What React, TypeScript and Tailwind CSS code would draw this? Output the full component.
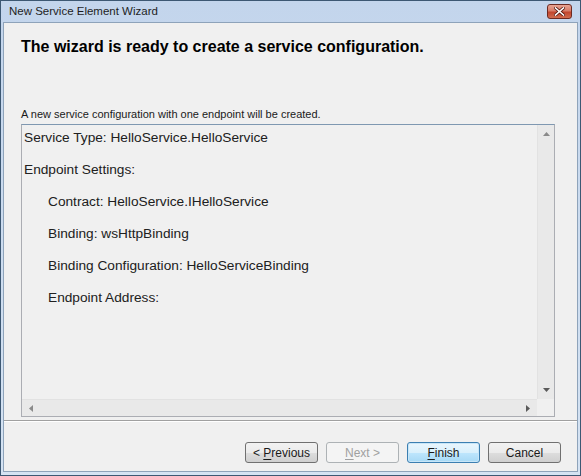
import React from 'react';

const lines: { text: string; indent: boolean }[] = [
    { text: 'Service Type: HelloService.HelloService', indent: false },
    { text: 'Endpoint Settings:', indent: false },
    { text: 'Contract: HelloService.IHelloService', indent: true },
    { text: 'Binding: wsHttpBinding', indent: true },
    { text: 'Binding Configuration: HelloServiceBinding', indent: true },
    { text: 'Endpoint Address:', indent: true },
];

function WizButton({ label, hot, disabled, focused }: { label: string; hot?: number; disabled?: boolean; focused?: boolean }) {
    const before = hot === undefined ? label : label.slice(0, hot);
    const key = hot === undefined ? '' : label.charAt(hot);
    const after = hot === undefined ? '' : label.slice(hot + 1);

    let box = 'border-[#707070] bg-[linear-gradient(#f2f2f2_0%,#ebebeb_50%,#dddddd_51%,#cfcfcf_100%)] text-[#1a1a1a]';
    if (disabled) box = 'border-[#adb2b5] bg-[#f4f4f4] text-[#a0a0a0]';
    if (focused) box = 'border-[#3c7fb1] bg-[linear-gradient(#eaf6fd_0%,#d9f0fc_50%,#bee6fd_51%,#a7d9f5_100%)] text-[#1a1a1a] shadow-[inset_0_0_0_1px_#c8e6f8]';

    return (
        <div className={`w-[73px] h-[21px] rounded-[3px] border flex items-center justify-center text-[12px] ${box}`}>
            <span>
                {before}
                {key && <span className="underline underline-offset-2">{key}</span>}
                {after}
            </span>
        </div>
    );
}

function App() {
    return (
        <div className="w-[581px] h-[476px] bg-[#3d5873] p-px font-['Liberation_Sans',Arial,sans-serif]">
            <div className="w-full h-full bg-[linear-gradient(#c3d5ec,#d5e3f3)] flex flex-col px-[2px] pb-[3px]">
                {/* title bar */}
                <div className="h-[21px] flex items-center justify-between pl-[6px] pr-[6px] shrink-0">
                    <span className="text-[11.5px] text-[#1e1e1e]">New Service Element Wizard</span>
                    <div className="w-[25px] h-[15px] mt-[-1px] rounded-[3px] border border-[#6d2a22] bg-[linear-gradient(#e8a493_0%,#d77c68_45%,#c2452d_55%,#d06c4f_100%)] flex items-center justify-center">
                        <svg width="11" height="9" viewBox="0 0 11 9">
                            <path d="M1.5 1 L9.5 8 M9.5 1 L1.5 8" stroke="#5a1b12" strokeWidth="3.2" strokeLinecap="square" />
                            <path d="M1.5 1 L9.5 8 M9.5 1 L1.5 8" stroke="#ffffff" strokeWidth="1.6" strokeLinecap="square" />
                        </svg>
                    </div>
                </div>

                {/* client area */}
                <div className="flex-1 bg-[#f0f0f0] border border-[#8ea3ba] flex flex-col">
                    <div className="pl-[17px] pt-[14px] h-[85px]">
                        <h1 className="text-[16px] font-bold text-black leading-[20px]">
                            The wizard is ready to create a service configuration.
                        </h1>
                    </div>
                    <div className="pl-[17px] text-[11px] leading-[13px] text-[#1a1a1a] h-[16px]">
                        A new service configuration with one endpoint will be created.
                    </div>

                    {/* summary box */}
                    <div className="ml-[17px] w-[534px] h-[293px] border border-[#abadb3] border-t-[#7f98b1] bg-[#f0f0f0] flex flex-col">
                        <div className="flex flex-1 min-h-0">
                            <div className="flex-1 pl-[2px] pt-[5px] text-[13.7px] leading-[16px] text-[#202020]">
                                {lines.map((l) => (
                                    <div key={l.text} className={`mb-[16px] ${l.indent ? 'pl-[24px]' : ''}`}>
                                        {l.text}
                                    </div>
                                ))}
                            </div>
                            <div className="w-[17px] bg-[#e9e9e9] border-l border-[#e2e2e2] flex flex-col items-center justify-between py-[7px]">
                                <svg width="7" height="4" viewBox="0 0 7 4"><path d="M3.5 0 L7 4 L0 4 Z" fill="#8a8a8a" /></svg>
                                <svg width="7" height="4" viewBox="0 0 7 4"><path d="M0 0 L7 0 L3.5 4 Z" fill="#5a5a5a" /></svg>
                            </div>
                        </div>
                        <div className="h-[17px] flex shrink-0">
                            <div className="flex-1 bg-[#e9e9e9] border-t border-[#e2e2e2] flex items-center justify-between px-[7px]">
                                <svg width="4" height="7" viewBox="0 0 4 7"><path d="M4 0 L4 7 L0 3.5 Z" fill="#8a8a8a" /></svg>
                                <svg width="4" height="7" viewBox="0 0 4 7"><path d="M0 0 L4 3.5 L0 7 Z" fill="#5a5a5a" /></svg>
                            </div>
                            <div className="w-[17px] bg-[#f0f0f0]" />
                        </div>
                    </div>

                    <div className="mt-[3px] border-t border-[#a0a0a0] border-b border-b-white" />

                    <div className="flex justify-end gap-[8px] pr-[16px] pt-[20px]">
                        <WizButton label="< Previous" hot={2} />
                        <WizButton label="Next >" hot={0} disabled />
                        <WizButton label="Finish" hot={0} focused />
                        <WizButton label="Cancel" />
                    </div>
                </div>
            </div>
        </div>
    );
}

export default App;
